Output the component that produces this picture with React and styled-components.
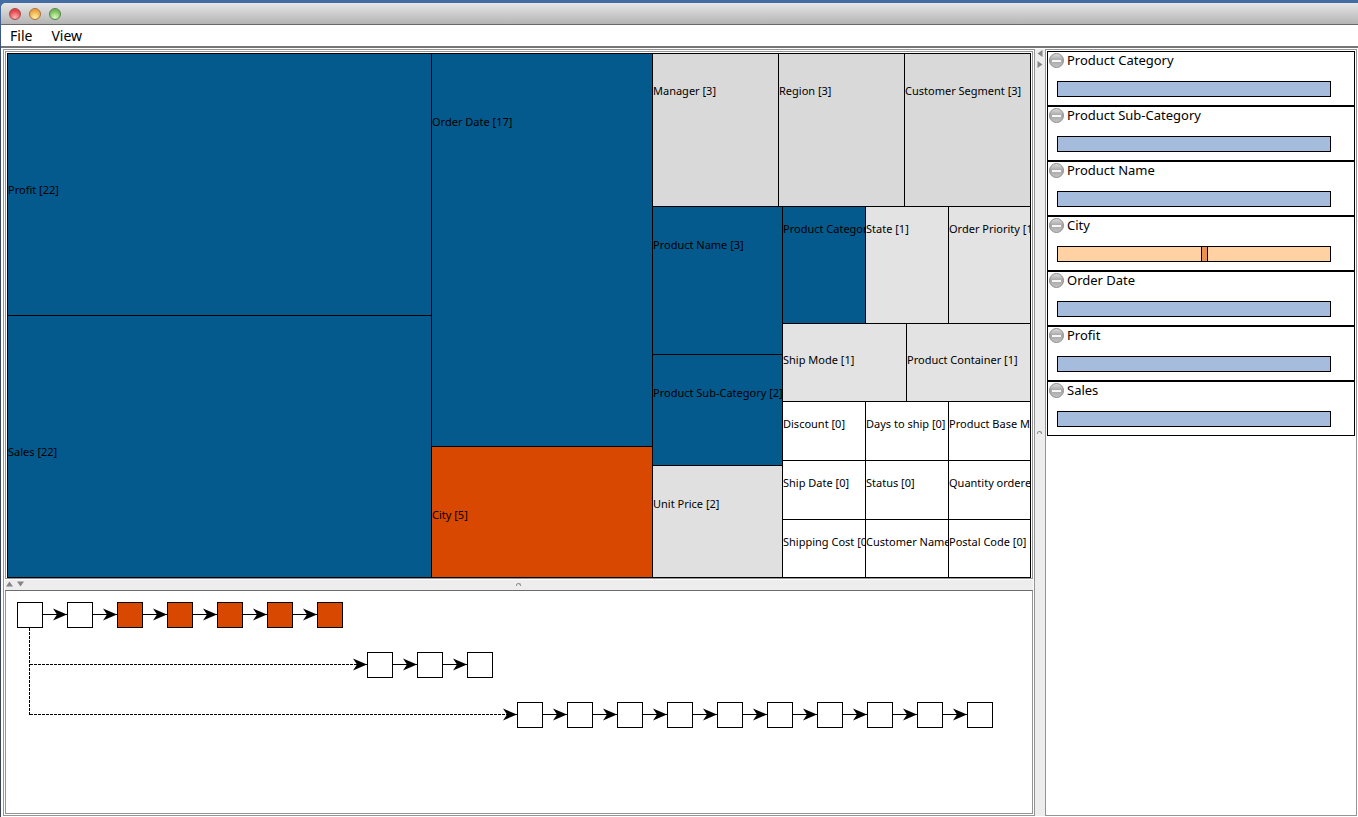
import React from 'react';
import styled, { createGlobalStyle } from 'styled-components';

const GlobalStyle = createGlobalStyle`
  * { box-sizing: border-box; }
  body {
    margin: 0;
    font-family: "Noto Sans", "DejaVu Sans", sans-serif;
    color: #000;
  }
`;

const Desktop = styled.div`
  height: 100vh;
  padding: 3px 0 0 1px;
  background: linear-gradient(#446da6 3px, #34466a 60px, #3a4254);
`;

const Window = styled.div`
  display: flex;
  flex-direction: column;
  height: 100%;
  background: #fff;
  border-radius: 5px 0 0 0;
  overflow: hidden;
`;

const TitleBar = styled.header`
  display: flex;
  align-items: center;
  gap: 8px;
  height: 22px;
  flex: none;
  padding-left: 8px;
  background: linear-gradient(#e6e6e6, #b4b4b4);
  border-bottom: 1px solid #6a6a6a;
`;

const Light = styled.button`
  width: 12px;
  height: 12px;
  padding: 0;
  border: 1px solid ${(p) => p.$edge};
  border-radius: 50%;
  background: radial-gradient(circle at 50% 85%, ${(p) => p.$glow}, ${(p) => p.$tint} 70%);
`;

const MenuBar = styled.nav`
  display: flex;
  align-items: center;
  gap: 19px;
  height: 23px;
  flex: none;
  padding-left: 9px;
  border-bottom: 2px solid #757575;
`;

const MenuButton = styled.button`
  padding: 0;
  border: 0;
  background: none;
  font: inherit;
  font-size: 14px;
  line-height: 20px;
`;

const Body = styled.main`
  flex: 1;
  min-height: 0;
  display: grid;
  grid-template-columns: minmax(0, 1032fr) 10px minmax(0, 312fr);
  padding: 1px 1px 1px 2px;
`;

const LeftPane = styled.div`
  display: grid;
  grid-template-rows: minmax(0, 528fr) 11px minmax(0, 224fr);
  min-height: 0;
  padding: 1px;
  border: 1px solid #949494;
`;

const TreePane = styled.section`
  padding: 1px 1px 0;
  border: 1px solid #949494;
`;

const RowSplitter = styled.div`
  display: flex;
  align-items: center;
  position: relative;
  padding: 0 0 2px 1px;
  border-top: 1px solid #fff;
  background: #ededed;
`;

const ColumnSplitter = styled.div`
  position: relative;
  padding: 1px 2px;
  background: #ededed;
`;

const Grip = styled.span`
  position: absolute;
  top: 50%;
  left: 50%;
  width: 5px;
  height: 3px;
  margin: -2px 0 0 -3px;
  border: 1px solid #8c8c8c;
  border-bottom: 0;
  border-radius: 3px 3px 0 0;
`;

const TreeMap = styled.div`
  display: grid;
  grid-template-columns: minmax(0, 424fr) minmax(0, 221fr) minmax(0, 378fr);
  height: 100%;
  border: solid #000;
  border-width: 0 1px 1px 0;
`;

const Split = styled.div`
  display: grid;
  min-width: 0;
  min-height: 0;
  grid-template-columns: ${(p) => tracks(p.$cols)};
  grid-template-rows: ${(p) => tracks(p.$rows)};
`;

const Cell = styled.div`
  min-width: 0;
  min-height: 0;
  padding-top: ${(p) => p.$drop}px;
  border: solid #000;
  border-width: 1px 0 0 1px;
  background: ${(p) => p.$fill};
  font-size: 11px;
  line-height: 14px;
  white-space: nowrap;
  overflow: hidden;
`;

const HistoryPane = styled.section`
  min-height: 0;
  border: 1px solid #949494;
  border-top-color: #6c6c6c;
  overflow: hidden;

  svg { display: block; }
`;

const FilterPane = styled.aside`
  min-height: 0;
  padding: 1px;
  border: 1px solid #949494;
`;

const FilterRow = styled.div`
  height: 55px;
  border: 1px solid #000;
`;

const FilterHead = styled.div`
  display: flex;
  gap: 3px;
  height: 18px;
  font-size: 13px;
  line-height: 16px;
`;

const CollapseButton = styled.button`
  display: block;
  width: 16px;
  height: 16px;
  padding: 0;
  border: 0;
  background: none;

  svg { display: block; }
`;

const RangeBar = styled.div`
  height: 16px;
  margin: 11px 23px 0 9px;
  border: 1px solid #000;
  background: ${(p) => (p.$active ? '#ffd1a3' : '#a6bcdd')};
`;

const RangeMark = styled.div`
  width: 7px;
  height: 14px;
  margin-left: 52.5%;
  border: solid #000;
  border-width: 0 1px;
  background: #e88f51;
`;

function tracks(list = [1]) {
  return list.map((n) => `minmax(0, ${n}fr)`).join(' ');
}

const BLUE = '#045a8d';
const ORANGE = '#d94801';
const GRAY3 = '#d9d9d9';
const GRAY2 = '#e0e0e0';
const GRAY1 = '#e3e3e3';
const WHITE = '#fff';

const group = (drop, items) =>
  items.map(([name, fill]) => (
    <Cell key={name} $drop={drop} $fill={fill}>{name}</Cell>
  ));

function AttributeMap() {
  return (
    <TreeMap>
      <Split $rows={[262, 262]}>
        {group(129, [['Profit [22]', BLUE], ['Sales [22]', BLUE]])}
      </Split>
      <Split $rows={[393, 131]}>
        {group(61, [['Order Date [17]', BLUE], ['City [5]', ORANGE]])}
      </Split>
      <Split $rows={[153, 371]}>
        <Split $cols={[1, 1, 1]}>
          {group(30, [['Manager [3]', GRAY3], ['Region [3]', GRAY3], ['Customer Segment [3]', GRAY3]])}
        </Split>
        <Split $cols={[130, 248]}>
          <Split $rows={[148, 111, 112]}>
            {group(31, [['Product Name [3]', BLUE], ['Product Sub-Category [2]', BLUE], ['Unit Price [2]', GRAY2]])}
          </Split>
          <Split $rows={[117, 78, 176]}>
            <Split $cols={[83, 83, 82]}>
              {group(15, [['Product Category [1]', BLUE], ['State [1]', GRAY1], ['Order Priority [1]', GRAY1]])}
            </Split>
            <Split $cols={[1, 1]}>
              {group(29, [['Ship Mode [1]', GRAY1], ['Product Container [1]', GRAY1]])}
            </Split>
            <Split $cols={[83, 83, 82]} $rows={[59, 59, 58]}>
              {group(15, [
                ['Discount [0]', WHITE], ['Days to ship [0]', WHITE], ['Product Base Margin [0]', WHITE],
                ['Ship Date [0]', WHITE], ['Status [0]', WHITE], ['Quantity ordered [0]', WHITE],
                ['Shipping Cost [0]', WHITE], ['Customer Name [0]', WHITE], ['Postal Code [0]', WHITE],
              ])}
            </Split>
          </Split>
        </Split>
      </Split>
    </TreeMap>
  );
}

const branches = [
  { start: 0, count: 7, filledFrom: 2 },
  { start: 7, count: 3 },
  { start: 10, count: 10 },
];

function HistoryGraph() {
  return (
    <svg width="1000" height="150" role="img" aria-label="Exploration history" shapeRendering="crispEdges">
      <path d="M23.5 37V123.5" stroke="#000" strokeDasharray="3 1" fill="none" />
      {branches.map((b, row) => {
        const y = 11 + row * 50;
        return (
          <g key={row}>
            {row > 0 && (
              <path d={`M24 ${y + 12.5}H${b.start * 50 + 11}`} stroke="#000" strokeDasharray="3 1" />
            )}
            {Array.from({ length: b.count }, (_, i) => {
              const x = 11 + (b.start + i) * 50;
              return (
                <g key={i}>
                  {i > 0 && <path d={`M${x - 24} ${y + 12.5}H${x}`} stroke="#000" />}
                  {(i > 0 || row > 0) && (
                    <path
                      d={`M${x} ${y + 12.5}L${x - 14} ${y + 6.5}L${x - 10} ${y + 12.5}L${x - 14} ${y + 18.5}Z`}
                      shapeRendering="auto"
                    />
                  )}
                  <rect
                    x={x + 0.5}
                    y={y + 0.5}
                    width="25"
                    height="25"
                    stroke="#000"
                    fill={i >= b.filledFrom ? ORANGE : WHITE}
                  />
                </g>
              );
            })}
          </g>
        );
      })}
    </svg>
  );
}

function MinusIcon() {
  return (
    <svg width="16" height="16" viewBox="0 0 16 16" aria-hidden="true">
      <defs>
        <linearGradient id="ball" x1="0" y1="0" x2="0" y2="1">
          <stop offset="0" stopColor="#dcdcdc" />
          <stop offset="0.5" stopColor="#a6a6a6" />
          <stop offset="1" stopColor="#c4c4c4" />
        </linearGradient>
      </defs>
      <circle cx="8.500" cy="8.500" r="7" fill="url(#ball)" stroke="#8e8e8e" />
      <rect x="4" y="8" width="9" height="2" fill="#fff" opacity="0.9" />
    </svg>
  );
}

const filters = [
  'Product Category',
  'Product Sub-Category',
  'Product Name',
  'City',
  'Order Date',
  'Profit',
  'Sales',
];

export default function App() {
  return (
    <Desktop>
      <GlobalStyle />
      <Window>
        <TitleBar>
          <Light aria-label="Close" $edge="#a5474a" $tint="#e0444a" $glow="#ffb5b0" />
          <Light aria-label="Minimize" $edge="#a8713c" $tint="#eba540" $glow="#fff2a0" />
          <Light aria-label="Zoom" $edge="#56824a" $tint="#76b95c" $glow="#d8ffb8" />
        </TitleBar>
        <MenuBar>
          <MenuButton>File</MenuButton>
          <MenuButton>View</MenuButton>
        </MenuBar>
        <Body>
          <LeftPane>
            <TreePane>
              <AttributeMap />
            </TreePane>
            <RowSplitter>
              <svg width="18" height="6" aria-hidden="true" fill="#858585">
                <path d="M0 5.500H7L3.500 0.500Z M11 0.500H18L14.500 5.500Z" />
              </svg>
              <Grip />
            </RowSplitter>
            <HistoryPane>
              <HistoryGraph />
            </HistoryPane>
          </LeftPane>
          <ColumnSplitter>
            <svg width="6" height="18" aria-hidden="true" fill="#858585">
              <path d="M5.500 0V7L0.500 3.500Z M0.500 11V18L5.500 14.500Z" />
            </svg>
            <Grip />
          </ColumnSplitter>
          <FilterPane>
            {filters.map((name) => (
              <FilterRow key={name}>
                <FilterHead>
                  <CollapseButton aria-label={`Collapse ${name}`}>
                    <MinusIcon />
                  </CollapseButton>
                  <span>{name}</span>
                </FilterHead>
                <RangeBar $active={name === 'City'}>
                  {name === 'City' && <RangeMark />}
                </RangeBar>
              </FilterRow>
            ))}
          </FilterPane>
        </Body>
      </Window>
    </Desktop>
  );
}
